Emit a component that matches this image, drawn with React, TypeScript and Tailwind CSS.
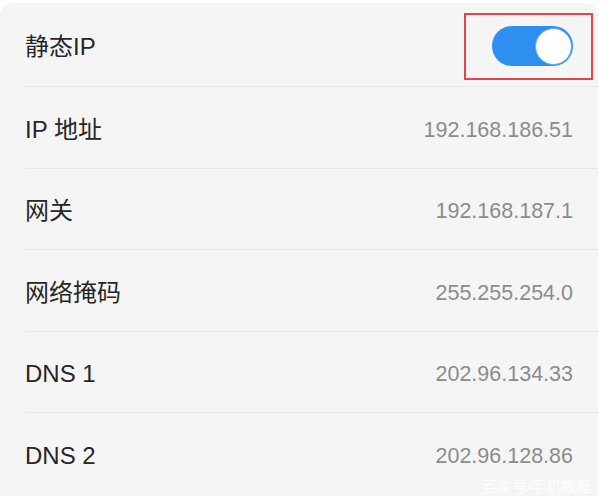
import React from "react";

const rows = [
  { label: "IP 地址", value: "192.168.186.51" },
  { label: "网关", value: "192.168.187.1" },
  { label: "网络掩码", value: "255.255.254.0" },
  { label: "DNS 1", value: "202.96.134.33" },
  { label: "DNS 2", value: "202.96.128.86" },
];

const font = { fontFamily: '"Liberation Sans", "Noto Sans CJK SC", sans-serif' };

const App = () => {
  return (
    <div className="w-[601px] h-[496px] bg-white overflow-hidden relative" style={font}>
      <div className="mt-[3px] w-[598px] h-[493px] bg-[#f5f5f5] rounded-t-[12px] flex flex-col">
        <div className="h-[84px] ml-[25px] pr-[25px] flex items-center justify-between border-b border-[#e6e6e6]">
          <span className="text-[24px] text-[#262626] pt-[5px]">静态IP</span>
          <div className="w-[129px] h-[67px] border-2 border-[#e8434b] flex items-center justify-end pr-[18px] -mr-[20px] mt-[3px]">
            <div className="w-[81px] h-[40px] rounded-full bg-[#2e8ff0] flex items-center justify-end pr-[1px]">
              <div className="w-[37px] h-[37px] rounded-full bg-white border border-[#5aa7f2]"></div>
            </div>
          </div>
        </div>
        {rows.map((r, i) => (
          <div
            key={i}
            className={`h-[81.5px] ml-[25px] pr-[25px] pt-[5px] flex items-center justify-between ${i < rows.length - 1 ? "border-b border-[#e6e6e6]" : ""}`}
          >
            <span className="text-[24px] text-[#262626]">{r.label}</span>
            <span className="text-[21.5px] text-[#8c8c8c]">{r.value}</span>
          </div>
        ))}
      </div>
      <div className="absolute right-[10px] bottom-0 text-[15px] leading-[18px] text-white opacity-90">百家号/手机教程</div>
    </div>
  );
};

export default App;
